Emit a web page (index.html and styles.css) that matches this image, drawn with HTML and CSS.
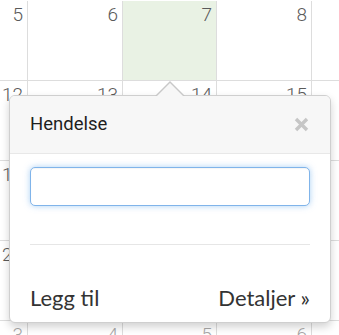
FILE: index.html
```html
<!DOCTYPE html>
<html lang="no">
<head>
<meta charset="utf-8">
<title>Kalender</title>
<link rel="stylesheet" href="styles.css">
</head>
<body>
<div class="stage">
  <div class="calendar">
    <div class="cell"><span class="num">5</span></div>
    <div class="cell"><span class="num">6</span></div>
    <div class="cell highlight"><span class="num">7</span></div>
    <div class="cell"><span class="num">8</span></div>
    <div class="cell"></div>

    <div class="cell"><span class="num">12</span></div>
    <div class="cell"><span class="num">13</span></div>
    <div class="cell"><span class="num">14</span></div>
    <div class="cell"><span class="num">15</span></div>
    <div class="cell"></div>

    <div class="cell"><span class="num">19</span></div>
    <div class="cell"><span class="num">20</span></div>
    <div class="cell"><span class="num">21</span></div>
    <div class="cell"><span class="num">22</span></div>
    <div class="cell"></div>

    <div class="cell"><span class="num">26</span></div>
    <div class="cell"><span class="num">27</span></div>
    <div class="cell"><span class="num">28</span></div>
    <div class="cell"><span class="num">29</span></div>
    <div class="cell"></div>

    <div class="cell other"><span class="num">3</span></div>
    <div class="cell other"><span class="num">4</span></div>
    <div class="cell other"><span class="num">5</span></div>
    <div class="cell other"><span class="num">6</span></div>
    <div class="cell other"></div>
  </div>

  <div class="popover">
    <div class="pop-header">
      <span class="pop-title">Hendelse</span>
      <button class="close" type="button" aria-label="Lukk">
        <svg width="15" height="15" viewBox="0 0 15 15"><path d="M2 2 L13 13 M13 2 L2 13" stroke="#c6c6c6" stroke-width="3.4" stroke-linecap="butt" fill="none"/></svg>
      </button>
    </div>
    <div class="pop-body">
      <input class="pop-input" type="text">
      <div class="sep"></div>
      <div class="pop-footer">
        <a class="link">Legg til</a>
        <a class="link">Detaljer »</a>
      </div>
    </div>
  </div>
</div>
</body>
</html>
```
FILE: styles.css
```css
html, body {
  margin: 0;
  padding: 0;
  background: #fff;
  overflow: hidden;
}
.stage {
  position: relative;
  width: 339px;
  height: 335px;
  overflow: hidden;
}
.calendar {
  display: grid;
  grid-template-columns: 95px 95px 94px 95px 95px;
  grid-auto-rows: 80px;
  margin-left: -67px;
  margin-top: 1px;
  font-family: Roboto, "Liberation Sans", sans-serif;
}
.cell {
  border-right: 1px solid #dddddd;
  border-bottom: 1px solid #dddddd;
  display: flex;
  justify-content: flex-end;
  align-items: flex-start;
  padding: 3px 4px 0 0;
  box-sizing: border-box;
}
.highlight {
  background: #e9f2e4;
}
.num {
  font-size: 19px;
  line-height: 22px;
  font-weight: 300;
  color: #5a5a5a;
}
.other .num {
  color: #a8a8a8;
}
.popover {
  position: absolute;
  left: 9px;
  top: 95px;
  width: 322px;
  box-sizing: border-box;
  background: #fff;
  border: 1px solid #cfcfcf;
  border-radius: 6px;
  box-shadow: 0 4px 9px rgba(0, 0, 0, 0.18);
}
.popover::before {
  content: "";
  position: absolute;
  left: 145px;
  top: -15px;
  border-left: 15px solid transparent;
  border-right: 15px solid transparent;
  border-bottom: 15px solid #c8c8c8;
}
.popover::after {
  content: "";
  position: absolute;
  left: 146px;
  top: -13px;
  border-left: 14px solid transparent;
  border-right: 14px solid transparent;
  border-bottom: 14px solid #f7f7f7;
}
.pop-header {
  height: 58px;
  box-sizing: border-box;
  background: #f7f7f7;
  border-bottom: 1px solid #e8e8e8;
  border-radius: 5px 5px 0 0;
  display: flex;
  align-items: center;
  justify-content: space-between;
  padding: 0 21px 0 20px;
}
.pop-title {
  font-family: Roboto, "Liberation Sans", sans-serif;
  font-size: 18.5px;
  color: #1e1e1e;
  position: relative;
  top: -1px;
}
.close {
  border: 0;
  background: none;
  padding: 0;
  width: 15px;
  height: 15px;
  display: block;
}
.close svg {
  display: block;
}
.pop-body {
  padding: 13px 20px 11px;
  display: flex;
  flex-direction: column;
}
.pop-input {
  height: 39px;
  box-sizing: border-box;
  border: 1px solid #80b4ea;
  border-radius: 5px;
  box-shadow: 0 0 6px rgba(102, 170, 235, 0.55), inset 0 1px 1px rgba(0,0,0,0.04);
  outline: none;
  margin: 0;
  width: 100%;
}
.sep {
  height: 1px;
  background: #e6e6e6;
  margin-top: 38px;
}
.pop-footer {
  display: flex;
  justify-content: space-between;
  margin-top: 40px;
  font-family: Lato, "Open Sans", sans-serif;
  font-size: 22px;
  line-height: 26px;
  color: #333;
}
.link {
  color: #333;
}
```
